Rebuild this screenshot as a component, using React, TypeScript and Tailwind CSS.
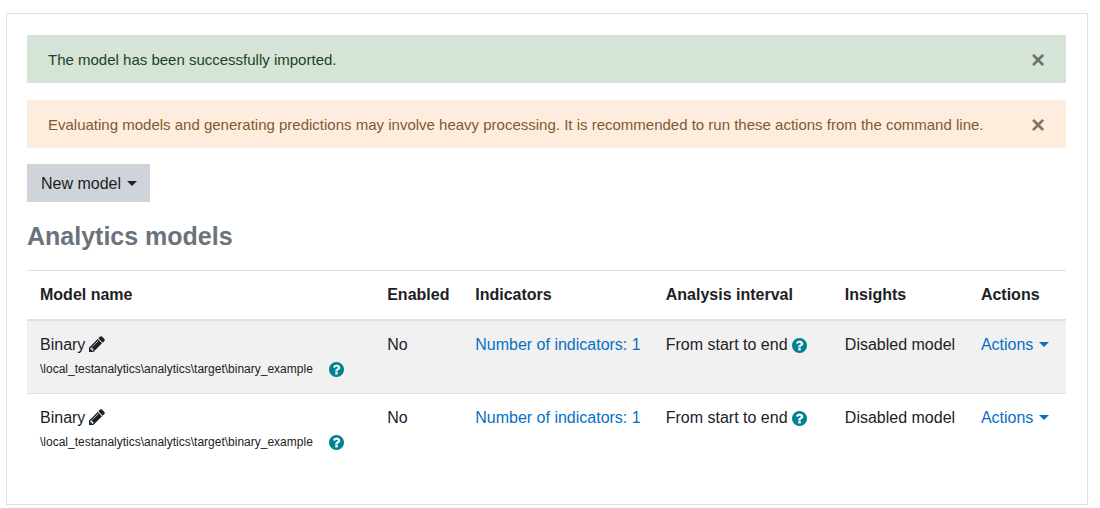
import { useState } from "react";
import type { ReactNode } from "react";

function PencilIcon() {
  return (
    <svg viewBox="128 128 1536 1536" className="mb-0.5 size-4 fill-current" aria-hidden="true">
      <path d="M491 1536l91-91-235-235-91 91v107h128v128h107zm523-928q0-22-22-22-10 0-17 7l-542 542q-7 7-7 17 0 22 22 22 10 0 17-7l542-542q7-7 7-17zm-54-192l416 416-832 832h-416v-416l832-832zm683 96q0 53-37 90l-166 166-416-416 166-165q36-38 90-38 53 0 91 38l235 234q37 39 37 91z" />
    </svg>
  );
}

function HelpButton({ label }: { label: string }) {
  return (
    <button type="button" aria-label={label} className="shrink-0 text-[#008196]">
      <svg viewBox="128 128 1536 1536" className="size-[15px] fill-current" aria-hidden="true">
        <path d="M1024 1376v-192q0-14-9-23t-23-9h-192q-14 0-23 9t-9 23v192q0 14 9 23t23 9h192q14 0 23-9t9-23zm256-672q0-88-55.5-163t-138.5-116-170-41q-243 0-371 213-15 24 8 42l132 100q7 6 19 6 16 0 25-12 53-68 86-92 34-24 86-24 48 0 85.5 26t37.5 59q0 38-20 61t-68 45q-63 28-115.5 86.5t-52.5 125.5v36q0 14 9 23t23 9h192q14 0 23-9t9-23q0-19 21.5-49.5t54.5-49.5q32-18 49-28.5t46-35 44.5-48 28-60.5 12.5-81zm384 192q0 209-103 385.5t-279.5 279.5-385.5 103-385.5-103-279.5-279.5-103-385.5 103-385.5 279.5-279.5 385.5-103 385.5 103 279.5 279.5 103 385.5z" />
      </svg>
    </button>
  );
}

function Caret() {
  return (
    <svg viewBox="0 0 10 5" className="mb-0.5 h-[5px] w-2.5 fill-current" aria-hidden="true">
      <path d="M0 0h10L5 5z" />
    </svg>
  );
}

function Alert({ tone, children }: { tone: "success" | "warning"; children: ReactNode }) {
  const [open, setOpen] = useState(true);
  if (!open) return null;
  const colours =
    tone === "success" ? "bg-[#d5e4d7] text-[#1c4324]" : "bg-[#feeddc] text-[#7d5a36]";
  return (
    <div
      role="alert"
      className={`flex items-center justify-between px-[21px] pt-[13px] pb-[11px] ${colours}`}
    >
      <p className="text-[15px] leading-6">{children}</p>
      <button
        type="button"
        aria-label="Dismiss this notification"
        onClick={() => setOpen(false)}
        className="text-2xl leading-6 font-bold text-black opacity-50"
      >
        ×
      </button>
    </div>
  );
}

const columns = [
  { title: "Model name", width: "w-[347px]" },
  { title: "Enabled", width: "w-[88px]" },
  { title: "Indicators", width: "w-[190px]" },
  { title: "Analysis interval", width: "w-[179px]" },
  { title: "Insights", width: "w-[136px]" },
  { title: "Actions", width: "w-[98px]" },
];

const models = [
  { id: 1, name: "Binary", target: "\\local_testanalytics\\analytics\\target\\binary_example" },
  { id: 2, name: "Binary", target: "\\local_testanalytics\\analytics\\target\\binary_example" },
];

export default function App() {
  return (
    <main className="mt-[13px] mr-3 ml-1.5 border border-[#dee2e6] bg-white pt-[21px] pr-[21px] pb-[38px] pl-5 font-['Liberation_Sans',Arial,sans-serif] text-base text-[#1d2125]">
      <div className="flex flex-col gap-[17px]">
        <Alert tone="success">The model has been successfully imported.</Alert>
        <Alert tone="warning">
          Evaluating models and generating predictions may involve heavy processing. It is
          recommended to run these actions from the command line.
        </Alert>
      </div>

      <button
        type="button"
        className="mt-4 flex items-center gap-1.5 bg-[#ced4da] pt-2 pr-[13px] pb-1.5 pl-3.5"
      >
        New model
        <Caret />
      </button>

      <h2 className="mt-[18px] text-[25px] leading-8 font-bold text-[#6a737b]">Analytics models</h2>

      <table className="mt-[18px] w-full border-collapse text-left">
        <thead>
          <tr className="border-t border-b-2 border-[#dee2e6]">
            {columns.map((column) => (
              <th
                key={column.title}
                scope="col"
                className={`py-3 pr-3 pl-[13px] font-bold ${column.width}`}
              >
                {column.title}
              </th>
            ))}
          </tr>
        </thead>
        <tbody>
          {models.map((model) => (
            <tr key={model.id} className="border-t border-[#dee2e6] align-top odd:bg-[#f1f1f1]">
              <td className="py-3 pr-3 pl-[13px]">
                <div className="flex items-center gap-1">
                  {model.name}
                  <button type="button" aria-label="Edit model name">
                    <PencilIcon />
                  </button>
                </div>
                <div className="flex items-center gap-4 text-xs leading-6">
                  {model.target}
                  <HelpButton label="Help with target" />
                </div>
              </td>
              <td className="py-3 pr-3 pl-[13px]">No</td>
              <td className="py-3 pr-3 pl-[13px]">
                <a href="#indicators" className="whitespace-nowrap text-[#0670c6]">
                  Number of indicators: 1
                </a>
              </td>
              <td className="py-3 pr-3 pl-[13px]">
                <div className="flex items-center gap-1 whitespace-nowrap">
                  From start to end
                  <HelpButton label="Help with analysis interval" />
                </div>
              </td>
              <td className="py-3 pr-3 pl-[13px] whitespace-nowrap">Disabled model</td>
              <td className="py-3 pr-3 pl-[13px]">
                <button type="button" className="flex items-center gap-1.5 text-[#0670c6]">
                  Actions
                  <Caret />
                </button>
              </td>
            </tr>
          ))}
        </tbody>
      </table>
    </main>
  );
}
